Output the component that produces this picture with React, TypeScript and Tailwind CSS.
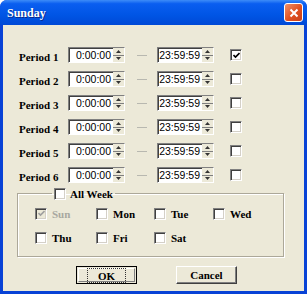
import { ReactNode } from "react"

const periods = [
  { name: "Period 1", start: "0:00:00", end: "23:59:59", on: true },
  { name: "Period 2", start: "0:00:00", end: "23:59:59", on: false },
  { name: "Period 3", start: "0:00:00", end: "23:59:59", on: false },
  { name: "Period 4", start: "0:00:00", end: "23:59:59", on: false },
  { name: "Period 5", start: "0:00:00", end: "23:59:59", on: false },
  { name: "Period 6", start: "0:00:00", end: "23:59:59", on: false },
]

const days = [
  [
    { name: "Sun", on: true, off: true },
    { name: "Mon", on: false, off: false },
    { name: "Tue", on: false, off: false },
    { name: "Wed", on: false, off: false },
  ],
  [
    { name: "Thu", on: false, off: false },
    { name: "Fri", on: false, off: false },
    { name: "Sat", on: false, off: false },
  ],
]

const colWidths = ["w-[61px]", "w-[58px]", "w-[59px]", "w-[50px]"]

const Check = ({ on, off }: { on?: boolean; off?: boolean }) => (
  <div
    className={`w-[12px] h-[12px] shrink-0 border-t border-l border-t-[#808080] border-l-[#808080] border-b border-r border-b-white border-r-white shadow-[inset_1px_1px_0_#404040,inset_-1px_-1px_0_#d4d0c8] flex items-center justify-center ${off ? "bg-[#ece9d8]" : "bg-white"}`}
  >
    {on && (
      <svg width="7" height="7" viewBox="0 0 7 7">
        <path d="M0.5 3 L2.5 5 L6.5 1" fill="none" stroke={off ? "#a0a0a0" : "#000"} strokeWidth="1.6" />
      </svg>
    )}
  </div>
)

const Spin = () => (
  <div className="flex flex-col w-[11px] h-full bg-[#ece9d8]">
    <div className="flex-1 flex items-center justify-center">
      <svg width="5" height="3" viewBox="0 0 5 3">
        <path d="M2.5 0 L5 3 L0 3 Z" fill="#333" />
      </svg>
    </div>
    <div className="h-px bg-[#808080]" />
    <div className="flex-1 flex items-center justify-center">
      <svg width="5" height="3" viewBox="0 0 5 3">
        <path d="M0 0 L5 0 L2.5 3 Z" fill="#333" />
      </svg>
    </div>
  </div>
)

const TimeBox = ({ value }: { value: string }) => (
  <div className="flex h-[16px] w-[57px] bg-white border-t border-l border-t-[#808080] border-l-[#808080] border-b border-r border-b-white border-r-white shadow-[inset_1px_1px_0_#404040]">
    <span className="flex-1 text-right pr-[2px] leading-[14px] text-[10.5px] font-['Liberation_Sans',sans-serif] text-black">
      {value}
    </span>
    <Spin />
  </div>
)

const Label = ({ children, dim }: { children: ReactNode; dim?: boolean }) => (
  <span
    className={`text-[11px] font-bold leading-[12px] font-['Liberation_Serif',serif] ${dim ? "text-[#a8a8a0]" : "text-black"}`}
  >
    {children}
  </span>
)

const App = () => {
  return (
    <div className="w-[307px] h-[294px] flex flex-col bg-[#0842d6] rounded-t-[7px] overflow-hidden select-none">
      <div className="h-[25px] shrink-0 flex items-center justify-between pl-[7px] pr-[4px] bg-[linear-gradient(#3d8cf8,#0a5ef0_15%,#0055e5_60%,#0049d6)]">
        <span className="text-white text-[12px] font-bold font-['Liberation_Serif',serif] [text-shadow:1px_1px_0_#0a2a8c]">
          Sunday
        </span>
        <div className="w-[19px] h-[19px] rounded-[3px] border border-white bg-[linear-gradient(135deg,#f0906a,#e0501f_55%,#c8401a)] flex items-center justify-center">
          <svg width="10" height="10" viewBox="0 0 10 10">
            <path d="M1.5 1.5 L8.5 8.5 M8.5 1.5 L1.5 8.5" stroke="#fff" strokeWidth="2" />
          </svg>
        </div>
      </div>
      <div className="flex-1 mx-[3px] mb-[3px] bg-[#ece9d8] flex flex-col">
        <div className="flex flex-col gap-[8px] pt-[22px] pl-[16px]">
          {periods.map((p) => (
            <div key={p.name} className="flex items-center h-[16px]">
              <div className="w-[49px]">
                <Label>{p.name}</Label>
              </div>
              <TimeBox value={p.start} />
              <div className="w-[10px] h-px bg-[#b8b8b0] ml-[12px] mr-[10px]" />
              <TimeBox value={p.end} />
              <div className="ml-[16px]">
                <Check on={p.on} />
              </div>
            </div>
          ))}
        </div>
        <fieldset className="mt-[4px] ml-[14px] w-[267px] border border-[#aca899] shadow-[inset_1px_1px_0_#fff,1px_1px_0_#fff] pl-[17px] pb-[12px]">
          <legend className="ml-[17px] px-[2px] flex items-center gap-[4px] h-[13px]">
            <Check />
            <Label>All Week</Label>
          </legend>
          <div className="flex flex-col gap-[11px] pt-[7px]">
            {days.map((row, i) => (
              <div key={i} className="flex h-[13px] items-center">
                {row.map((d, j) => (
                  <div key={d.name} className={`${colWidths[j]} flex items-center gap-[5px]`}>
                    <Check on={d.on} off={d.off} />
                    <Label dim={d.off}>{d.name}</Label>
                  </div>
                ))}
              </div>
            ))}
          </div>
        </fieldset>
        <div className="flex pl-[73px] gap-[39px] mt-[9px]">
          <button className="w-[61px] h-[18px] border border-black bg-[#ece9d8] p-px">
            <div className="h-full border-t border-l border-white border-b border-r border-b-[#808080] border-r-[#808080] flex items-center justify-center">
              <div className="px-[10px] outline outline-1 outline-dotted outline-[#333] leading-[11px]">
                <Label>OK</Label>
              </div>
            </div>
          </button>
          <button className="w-[61px] h-[18px] border-t border-l border-white border-b border-r border-b-[#404040] border-r-[#404040] bg-[#ece9d8] shadow-[inset_-1px_-1px_0_#808080] flex items-center justify-center">
            <Label>Cancel</Label>
          </button>
        </div>
      </div>
    </div>
  )
}

export default App
